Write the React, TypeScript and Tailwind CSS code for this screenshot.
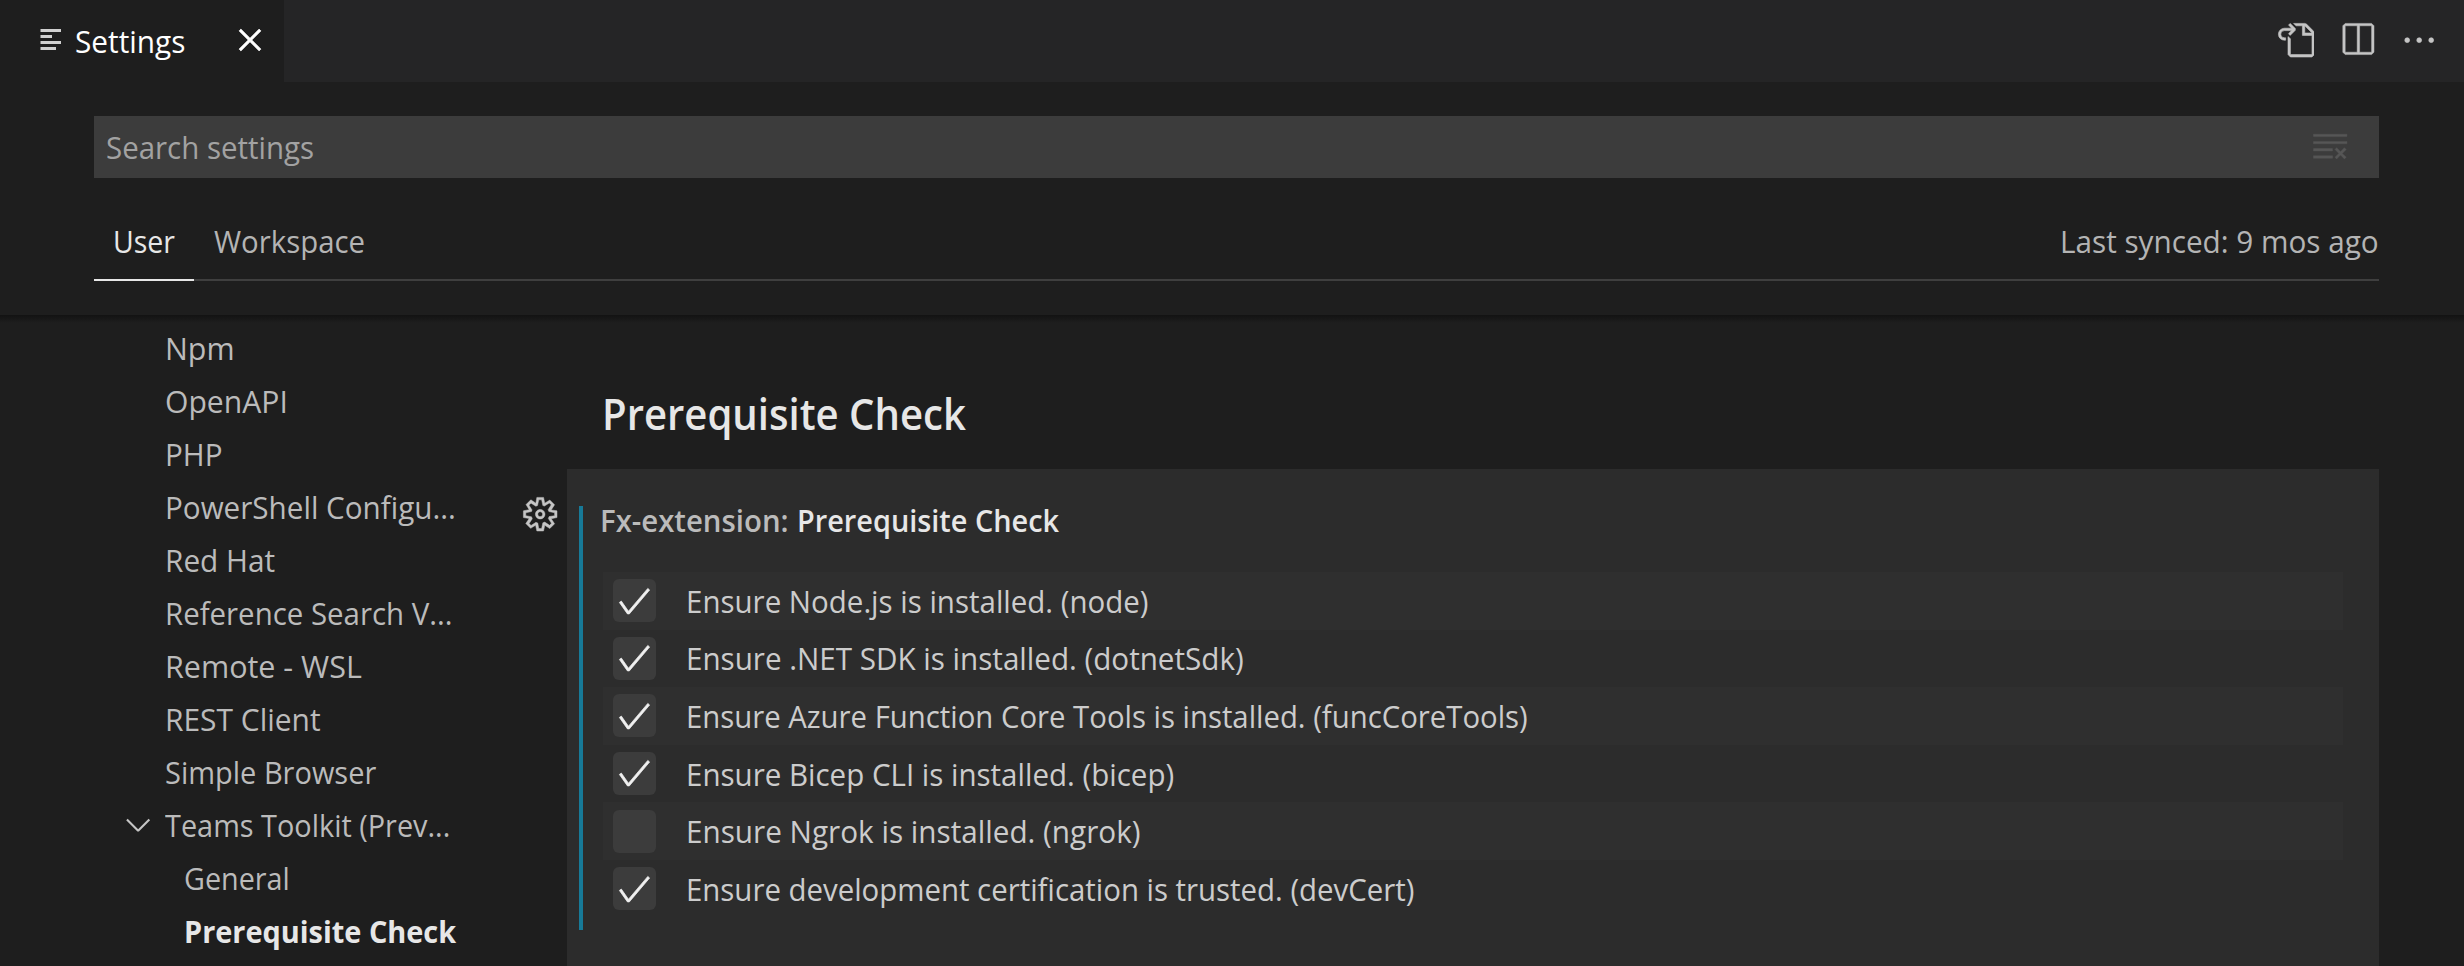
import type { ReactNode } from "react";
import {
  VscCheck,
  VscChevronDown,
  VscClearAll,
  VscClose,
  VscEllipsis,
  VscGear,
  VscGoToFile,
  VscSplitHorizontal,
} from "react-icons/vsc";

type TreeItem = { label: string; scale: string; kind?: "group" | "child" | "active" };

const tree: TreeItem[] = [
  { label: "Npm", scale: "scale-x-[0.98]" },
  { label: "OpenAPI", scale: "scale-x-[0.972]" },
  { label: "PHP", scale: "scale-x-[0.956]" },
  { label: "PowerShell Configu...", scale: "scale-x-[0.956]" },
  { label: "Red Hat", scale: "scale-x-[0.961]" },
  { label: "Reference Search V...", scale: "scale-x-[0.949]" },
  { label: "Remote - WSL", scale: "scale-x-[0.983]" },
  { label: "REST Client", scale: "scale-x-[0.966]" },
  { label: "Simple Browser", scale: "scale-x-[0.935]" },
  { label: "Teams Toolkit (Prev...", scale: "scale-x-[0.931]", kind: "group" },
  { label: "General", scale: "scale-x-[0.928]", kind: "child" },
  { label: "Prerequisite Check", scale: "scale-x-[0.932]", kind: "active" },
];

const checks = [
  { label: "Ensure Node.js is installed. (node)", scale: "scale-x-[0.951]", on: true },
  { label: "Ensure .NET SDK is installed. (dotnetSdk)", scale: "scale-x-[0.955]", on: true },
  { label: "Ensure Azure Function Core Tools is installed. (funcCoreTools)", scale: "scale-x-[0.946]", on: true },
  { label: "Ensure Bicep CLI is installed. (bicep)", scale: "scale-x-[0.952]", on: true },
  { label: "Ensure Ngrok is installed. (ngrok)", scale: "scale-x-[0.958]", on: false },
  { label: "Ensure development certification is trusted. (devCert)", scale: "scale-x-[0.948]", on: true },
];

function Label({ scale, className = "", children }: { scale: string; className?: string; children: ReactNode }) {
  return <span className={`block origin-left whitespace-nowrap ${scale} ${className}`}>{children}</span>;
}

function TabBar() {
  return (
    <header className="flex h-[82px] shrink-0 bg-[#252526]">
      <div className="flex w-[284px] items-center bg-[#1e1e1e] pl-10 text-white">
        <svg width="22" height="22" viewBox="0 0 22 22" fill="#d0d0d0" className="mb-[3px]">
          <path d="M.5 0H21v3H.5zM.5 6H12v3H.5zM.5 12H21v3H.5zM.5 18H16v3H.5z" />
        </svg>
        <Label scale="scale-x-[0.96]" className="ml-[13px] w-[115px]">
          Settings
        </Label>
        <VscClose strokeWidth={0.3} className="mb-[2px] ml-10 size-[40px]" />
      </div>
      <div className="flex flex-1 items-start justify-end gap-[23.5px] pt-[20.5px] pr-[26px] text-[#c5c5c5]">
        <VscGoToFile strokeWidth={0.25} className="size-[38.4px]" />
        <VscSplitHorizontal strokeWidth={0.2} className="size-[38.4px]" />
        <VscEllipsis strokeWidth={0.3} className="size-[38.4px]" />
      </div>
    </header>
  );
}

function SettingsHeader() {
  return (
    <section className="flex h-[233px] shrink-0 flex-col pt-[34px] pr-[85px] pl-[94px]">
      <div className="flex h-[62px] items-center justify-between bg-[#3c3c3c] pr-[29.7px] pl-3 text-[#a2a2a2]">
        <Label scale="scale-x-[0.95]">Search settings</Label>
        <VscClearAll strokeWidth={0.15} className="mb-[1.4px] size-[38.4px] text-[#565656]" />
      </div>
      <div className="mt-[22px] flex h-[81px] items-stretch justify-between border-b-2 border-[#3f3f3f]">
        <nav className="flex">
          <div className="-mb-[2px] flex w-[100px] items-center border-b-2 border-[#e7e7e7] pt-[3px] pl-[19px] text-[#e7e7e7]">
            <Label scale="scale-x-[0.919]">User</Label>
          </div>
          <div className="flex items-center pt-[3px] pl-[19.5px] text-[#b4b4b4]">
            <Label scale="scale-x-[0.947]">Workspace</Label>
          </div>
        </nav>
        <div className="flex items-center pt-[3px] text-[#b4b4b4]">
          <span className="block origin-right scale-x-[0.958] whitespace-nowrap">Last synced: 9 mos ago</span>
        </div>
      </div>
    </section>
  );
}

function TreeRow({ item }: { item: TreeItem }) {
  const nested = item.kind === "child" || item.kind === "active";
  return (
    <li className={`flex h-[53px] items-center ${item.kind === "active" ? "font-bold text-[#e7e7e7]" : "text-[#bbbbbb]"}`}>
      <span className={nested ? "w-[184px]" : "w-[165px] pl-[119px]"}>
        {item.kind === "group" && <VscChevronDown className="size-[38.4px] text-[#c5c5c5]" />}
      </span>
      <Label scale={item.scale}>{item.label}</Label>
    </li>
  );
}

function CheckRow({ label, scale, on, shaded }: { label: string; scale: string; on: boolean; shaded: boolean }) {
  return (
    <li className={`flex h-[57.6px] items-center pl-2.5 ${shaded ? "bg-[#2f2f2f]" : ""}`}>
      <span className="flex size-[43px] items-center justify-center rounded-md bg-[#3c3c3c] pr-[1.4px] text-[#f0f0f0]">
        {on && <VscCheck strokeWidth={0.3} className="size-[38.4px]" />}
      </span>
      <Label scale={scale} className="ml-[29.7px] text-[#cccccc]">
        {label}
      </Label>
    </li>
  );
}

export default function App() {
  return (
    <div className="flex h-[966px] w-[2464px] flex-col overflow-hidden bg-[#1e1e1e] font-['Open_Sans','Noto_Sans',sans-serif] text-[31px] leading-[42px]">
      <TabBar />
      <SettingsHeader />
      <main className="relative flex min-h-0 flex-1">
        <div className="absolute inset-x-0 top-0 h-2 bg-gradient-to-b from-[#121212] to-[#1e1e1e]" />
        <ul className="w-[521px] shrink-0 pt-[6px]">
          {tree.map((item) => (
            <TreeRow key={item.label} item={item} />
          ))}
        </ul>
        <div className="w-[46px] shrink-0 pt-[180px]">
          <VscGear strokeWidth={0.2} className="size-[38.4px] text-[#c5c5c5]" />
        </div>
        <div className="flex w-[1812px] flex-col">
          <h2 className="h-[154px] pt-[70px] pl-[35px] text-[43.2px] leading-[58px] font-semibold text-[#e7e7e7]">
            <Label scale="scale-x-[0.928]">Prerequisite Check</Label>
          </h2>
          <div className="flex-1 bg-[#2c2c2c] pt-[37px] pr-9 pl-3">
            <div className="h-[424px] border-l-[4px] border-[#177a98] pl-5">
              <h3 className="flex h-[66px] font-semibold">
                <Label scale="scale-x-[0.947]" className="-mt-[7px] -ml-[3px] w-[197px] text-[#bbbbbb]">
                  Fx-extension:
                </Label>
                <Label scale="scale-x-[0.931]" className="-mt-[7px] text-[#e7e7e7]">
                  Prerequisite Check
                </Label>
              </h3>
              <ul>
                {checks.map((check, i) => (
                  <CheckRow key={check.label} {...check} shaded={i % 2 === 0} />
                ))}
              </ul>
            </div>
          </div>
        </div>
      </main>
    </div>
  );
}
